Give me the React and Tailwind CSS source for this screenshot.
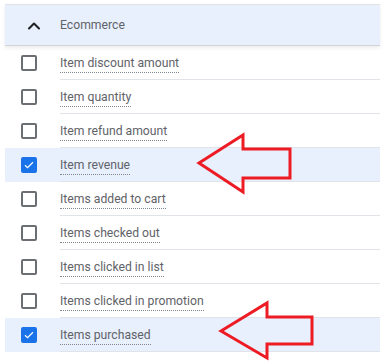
import { ChevronUp } from 'lucide-react'

const items = [
  { label: 'Item discount amount', checked: false },
  { label: 'Item quantity', checked: false },
  { label: 'Item refund amount', checked: false },
  { label: 'Item revenue', checked: true },
  { label: 'Items added to cart', checked: false },
  { label: 'Items checked out', checked: false },
  { label: 'Items clicked in list', checked: false },
  { label: 'Items clicked in promotion', checked: false },
  { label: 'Items purchased', checked: true },
]

function Checkbox({ checked }) {
  if (checked) {
    return (
      <div className="w-[16px] h-[16px] rounded-[2px] bg-[#1a73e8] flex items-center justify-center">
        <svg width="12" height="12" viewBox="0 0 24 24" fill="none">
          <path d="M4 12.5l5 5L20 6.5" stroke="white" strokeWidth="2.4" />
        </svg>
      </div>
    )
  }
  return <div className="w-[16px] h-[16px] rounded-[2px] border-2 border-[#6b6e72] bg-white" />
}

function Row({ label, checked }) {
  return (
    <div className={`flex h-[34px] items-stretch ${checked ? 'bg-[#e8f0fe]' : ''}`}>
      <div className="w-[55px] flex items-center pl-[16px]">
        <Checkbox checked={checked} />
      </div>
      <div className="flex-1 flex items-center pt-[3px] border-b border-[#e0e3e7]">
        <span className="text-[12.2px] leading-[16px] text-[#5f6368] border-b border-dotted border-[#80868b] pb-[1px]">
          {label}
        </span>
      </div>
    </div>
  )
}

function Arrow({ points }) {
  return (
    <polygon points={points} fill="none" stroke="#ed1c24" strokeWidth="3" strokeLinejoin="miter" />
  )
}

export default function App() {
  return (
    <div className="relative w-[391px] h-[364px] bg-white overflow-hidden" style={{ fontFamily: 'Roboto, "Liberation Sans", sans-serif' }}>
      <div className="pt-[4px] pl-[5px] w-[380px]">
        <div className="border-t border-[#e3e3e3] border-b border-b-[#d2d4d8] bg-[#e8f0fe] h-[42px] flex items-center pt-[1px] shadow-[0_2px_4px_rgba(0,0,0,0.08)] relative z-10">
          <div className="w-[55px] flex justify-center pl-[2px]">
            <ChevronUp size={20} strokeWidth={2.5} className="text-[#202124]" />
          </div>
          <span className="text-[12.2px] text-[#5f6368]">Ecommerce</span>
        </div>
        <div>
          {items.map((it) => (
            <Row key={it.label} {...it} />
          ))}
        </div>
      </div>
      <svg className="absolute inset-0 pointer-events-none" width="391" height="364">
        <Arrow points="199,163 243,135 243,149 290,149 290,178 243,178 243,192" />
        <Arrow points="221,331 267,303 267,317 312,317 312,344 267,344 267,358" />
      </svg>
    </div>
  )
}
